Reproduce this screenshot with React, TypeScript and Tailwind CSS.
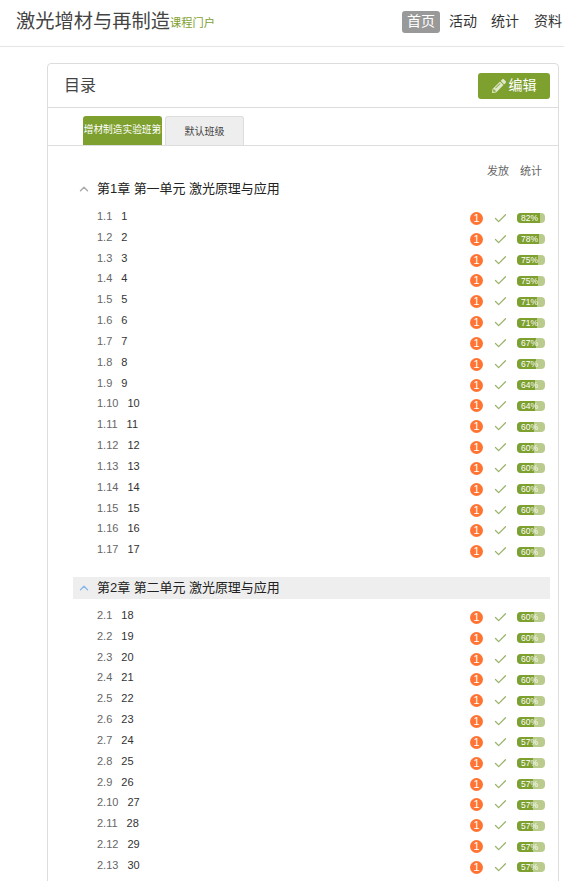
import { Check, ChevronUp } from "lucide-react";
import { FaPencilAlt } from "react-icons/fa";

type Lesson = { no: string; title: string; pct: number };

const pctOne = [82, 78, 75, 75, 71, 71, 67, 67, 64, 64, 60, 60, 60, 60, 60, 60, 60];
const pctTwo = [60, 60, 60, 60, 60, 60, 57, 57, 57, 57, 57, 57, 57];
const titlesTwo = [18, 19, 20, 21, 22, 23, 24, 25, 26, 27, 28, 29, 30];

const chapterOne: Lesson[] = pctOne.map((pct, i) => ({
  no: `1.${i + 1}`,
  title: String(i + 1),
  pct,
}));

const chapterTwo: Lesson[] = pctTwo.map((pct, i) => ({
  no: `2.${i + 1}`,
  title: String(titlesTwo[i]),
  pct,
}));

const LessonRow = ({ item }: { item: Lesson }) => (
  <div className="flex h-[20.83px] items-center pl-[49px] pr-[13px]">
    <div className="mb-[5px] flex flex-1 gap-[9px] text-[11px] leading-[14px]">
      <span className="text-[#666]">{item.no}</span>
      <span className="text-[#333]">{item.title}</span>
    </div>
    <div className="flex h-[13px] w-[13px] items-center justify-center rounded-full bg-[#ff7433] text-[11px] leading-none text-white">
      1
    </div>
    <Check className="ml-[10px] h-[15px] w-[15px] text-[#9ab36a]" strokeWidth={2} />
    <div className="relative ml-[9px] h-[10px] w-[28px] overflow-hidden rounded-[4px] bg-[#b9cc8e]">
      <div className="h-full bg-[#7ea02f]" style={{ width: `${item.pct}%` }} />
      <span className="absolute inset-0 pr-[3px] text-center text-[8.5px] leading-[10px] text-white">
        {item.pct}%
      </span>
    </div>
  </div>
);

const App = () => {
  return (
    <div className="h-[881px] overflow-hidden bg-white font-['Liberation_Sans','Noto_Sans_CJK_SC',sans-serif] text-[#333]">
      {/* TOP */}
      <header className="flex h-[47px] items-center justify-between border-b border-[#e5e5e5] pl-[16px] pr-[2px]">
        <div className="mb-[3px] flex items-end">
          <span className="text-[19.25px] leading-[28px] text-[#444]">激光增材与再制造</span>
          <span className="mb-[5px] text-[11.25px] leading-[16px] text-[#7ea02f]">课程门户</span>
        </div>
        <nav className="mb-[3px] flex items-center text-[14px]">
          <span className="flex h-[22px] w-[38px] items-center justify-center rounded-[3px] bg-[#999] text-white">
            首页
          </span>
          <span className="ml-[9px]">活动</span>
          <span className="ml-[14px]">统计</span>
          <span className="ml-[15px]">资料</span>
        </nav>
      </header>

      {/* PANEL */}
      <main className="ml-[47px] mr-[5px] mt-[16px] h-[900px] rounded-t-[4px] border border-[#ddd]">
        <div className="flex h-[44px] items-center justify-between border-b border-[#ddd] pl-[16px] pr-[8px]">
          <h1 className="text-[16px] font-normal text-[#444]">目录</h1>
          <button className="flex h-[26px] w-[72px] items-center justify-center gap-[3px] rounded-[3px] bg-[#7ea02f] text-[14px] text-white">
            <FaPencilAlt className="h-[14px] w-[14px] text-[#dfe8c8]" />
            编辑
          </button>
        </div>

        <div className="flex h-[38px] items-end gap-[3px] border-b border-[#ddd] pl-[35px]">
          <div className="flex h-[29px] w-[79px] items-center justify-center whitespace-nowrap rounded-t-[3px] bg-[#7ea02f] text-[9.7px] text-white">
            增材制造实验班第
          </div>
          <div className="flex h-[29px] w-[79px] items-center justify-center rounded-t-[3px] border border-b-0 border-[#ddd] bg-[#eee] text-[10px] text-[#444]">
            默认班级
          </div>
        </div>

        <div className="flex justify-end gap-[11px] pr-[16px] pt-[17px] text-[11px] leading-[16px] text-[#666]">
          <span>发放</span>
          <span>统计</span>
        </div>

        {/* CHAPTER 1 */}
        <div className="ml-[25px] mr-[8px] mt-[-1px] flex h-[22px] items-center text-[13px] text-[#222]">
          <ChevronUp className="ml-[4px] h-[14px] w-[14px] text-[#aaa]" strokeWidth={2.5} />
          <span className="ml-[6px] tracking-[-0.05px]">第1章 第一单元 激光原理与应用</span>
        </div>
        <div className="mt-[8px]">
          {chapterOne.map((item) => (
            <LessonRow key={item.no} item={item} />
          ))}
        </div>

        {/* CHAPTER 2 */}
        <div className="ml-[25px] mr-[8px] mt-[15px] flex h-[22px] items-center bg-[#eee] text-[13px] text-[#222]">
          <ChevronUp className="ml-[4px] h-[14px] w-[14px] text-[#8ab8e8]" strokeWidth={2.5} />
          <span className="ml-[6px] tracking-[-0.05px]">第2章 第二单元 激光原理与应用</span>
        </div>
        <div className="mt-[8px]">
          {chapterTwo.map((item) => (
            <LessonRow key={item.no} item={item} />
          ))}
        </div>
      </main>
    </div>
  );
};

export default App;
